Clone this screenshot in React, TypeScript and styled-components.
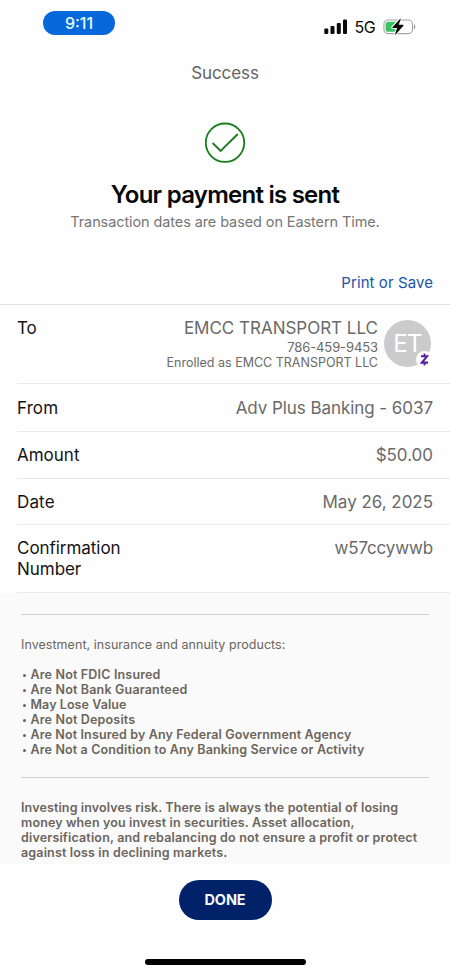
import React from "react";
import styled, { createGlobalStyle } from "styled-components";

const GlobalStyle = createGlobalStyle`
  *, *::before, *::after { box-sizing: border-box; }
  body { margin: 0; background: #fefefe; }
`;

const Screen = styled.div`
  width: 450px;
  height: 973px;
  display: flex;
  flex-direction: column;
  overflow: hidden;
  background: #fefefe;
  color: #141414;
  font-family: Inter, "Liberation Sans", sans-serif;
  font-size: 17px;
  line-height: 21px;
  white-space: nowrap;
`;

const StatusBar = styled.header`
  display: flex;
  justify-content: space-between;
  align-items: flex-start;
  height: 54px;
  flex: none;
  padding: 11px 34px 0 43px;
`;

const TimePill = styled.time`
  width: 72px;
  height: 24px;
  border-radius: 12px;
  background: #0668da;
  color: #e8fbff;
  font-size: 16px;
  font-weight: 500;
  line-height: 25px;
  letter-spacing: 0;
  text-align: center;
`;

const StatusIcons = styled.div`
  display: flex;
  align-items: center;
  height: 18px;
  margin-top: 7px;
  color: #0a0a0a;
`;

const Network = styled.span`
  margin: 1px 8px 0 7px;
  font-size: 16px;
  letter-spacing: -0.6px;
`;

const NavTitle = styled.div`
  flex: none;
  height: 38px;
  line-height: 38px;
  text-align: center;
  color: #646464;
  letter-spacing: -0.1px;
`;

const Hero = styled.section`
  flex: none;
  height: 173px;
  padding-top: 30px;
  display: flex;
  flex-direction: column;
  align-items: center;
`;

const Title = styled.h1`
  margin: 15px 0 0;
  font-size: 24px;
  line-height: 32px;
  font-weight: 600;
  letter-spacing: -0.75px;
  color: #080808;
`;

const Subtitle = styled.p`
  margin: 1px 0 0;
  font-size: 14.5px;
  line-height: 20px;
  color: #777;
  letter-spacing: -0.1px;
`;

const Actions = styled.div`
  flex: none;
  display: flex;
  justify-content: flex-end;
  height: 39px;
  padding: 7px 17px 0 0;
`;

const TextLink = styled.a`
  color: #1a56a5;
  font-size: 15px;
  letter-spacing: 0.08px;
`;

const Details = styled.dl`
  flex: none;
  margin: 0;
  border-top: 1px solid #e3e3e3;
`;

const Row = styled.div<{ $height: number; $top?: number }>`
  height: ${(p) => p.$height}px;
  display: flex;
  justify-content: space-between;
  margin-left: 17px;
  padding: ${(p) => p.$top ?? 13}px 17px 0 0;
  border-bottom: 1px solid #e9e9e9;
`;

const Label = styled.dt<{ $spacing?: number }>`
  width: 125px;
  white-space: normal;
  letter-spacing: ${(p) => p.$spacing ?? -0.2}px;
`;

const Value = styled.dd<{ $spacing?: number }>`
  margin: 0;
  color: #6a6a6a;
  text-align: right;
  letter-spacing: ${(p) => p.$spacing ?? -0.2}px;
`;

const Payee = styled.dd`
  margin: 0;
  display: flex;
  gap: 6px;
  color: #6a6a6a;
  text-align: right;
`;

const PayeeName = styled.div`
  letter-spacing: -0.01px;
`;

const PayeeNote = styled.div<{ $size: number; $spacing: number }>`
  font-size: ${(p) => p.$size}px;
  line-height: 16px;
  letter-spacing: ${(p) => p.$spacing}px;
`;

const Avatar = styled.div`
  position: relative;
  width: 47px;
  height: 47px;
  margin: 2px 2px 0 0;
  border-radius: 50%;
  background: #cbcbcb;
  color: #fff;
  font-size: 24px;
  font-weight: 400;
  line-height: 47px;
  letter-spacing: -0.8px;
  text-align: center;
`;

const Badge = styled.span`
  position: absolute;
  right: -2px;
  bottom: -1px;
  width: 17px;
  height: 17px;
  border-radius: 50%;
  background: #fefefe;
  display: flex;
  align-items: center;
  justify-content: center;
`;

const Disclosures = styled.section`
  flex: none;
  height: 271px;
  padding: 21px 21px 0;
  background: #fafafa;
  color: #6b655c;
  font-size: 12.5px;
  line-height: 15px;
`;

const Rule = styled.hr`
  height: 1px;
  margin: 0;
  border: 0;
  background: #d2d2d2;
`;

const Intro = styled.p`
  margin: 22px 0 15px;
  letter-spacing: 0.05px;
`;

const Notices = styled.ul`
  margin: 0 0 20px;
  padding: 0;
  list-style: none;
  font-weight: 600;
`;

const Notice = styled.li<{ $spacing: number }>`
  letter-spacing: ${(p) => p.$spacing}px;
  display: flex;
  &::before {
    content: "";
    width: 3px;
    height: 3px;
    margin: 7px 4.5px 0 2px;
    border-radius: 50%;
    background: currentColor;
  }
`;

const Risk = styled.p`
  margin: 22px 0 0;
  font-weight: 600;
`;

const RiskLine = styled.span<{ $spacing: number }>`
  display: block;
  letter-spacing: ${(p) => p.$spacing}px;
`;

const Footer = styled.footer`
  flex: 1;
  display: flex;
  flex-direction: column;
  align-items: center;
  justify-content: space-between;
  padding: 16px 0 8px;
`;

const DoneButton = styled.button`
  width: 93px;
  height: 40px;
  padding: 0;
  border: 0;
  border-radius: 20px;
  background: #012169;
  color: #f4f8ff;
  font: 700 14.5px/40px Inter, "Liberation Sans", sans-serif;
  letter-spacing: -0.15px;
`;

const HomeIndicator = styled.div`
  width: 161px;
  height: 6px;
  border-radius: 3px;
  background: #000;
`;

const SignalIcon = () => (
  <svg width="24" height="16" viewBox="0 0 24 16" fill="currentColor">
    <rect x="0.3" y="9.5" width="4" height="5.5" rx="1.1" />
    <rect x="6.5" y="7" width="4" height="8" rx="1.1" />
    <rect x="12.8" y="4" width="4" height="11" rx="1.1" />
    <rect x="19" y="0.6" width="4" height="14.4" rx="1.1" />
  </svg>
);

const BatteryIcon = () => (
  <svg width="33" height="18" viewBox="0 0 33 18">
    <rect x="0.9" y="2" width="28.7" height="13.6" rx="4.4" fill="none" stroke="#a3a3a3" strokeWidth="1.1" />
    <path d="M31 6.6c1.6.6 1.6 3.9 0 4.5z" fill="#8a8a8a" />
    <path d="M5.2 3.8H14v10H5.2a2.6 2.6 0 0 1-2.6-2.6V6.4A2.6 2.6 0 0 1 5.2 3.8z" fill="#3cc463" />
    <path
      d="M17 .9 9.4 9.2q-.5.8.5.8h4.2l-2 6q-.1 1.1.8.3l7.5-8.6q.5-.9-.5-.9h-4.2l2-5.4q.1-1.1-.7-.5z"
      fill="#0a0a0a"
      stroke="#fefefe"
      strokeWidth="2"
      paintOrder="stroke"
    />
  </svg>
);

const SuccessIcon = () => (
  <svg width="42" height="42" viewBox="0 0 42 42" fill="none" stroke="#1b7d1f">
    <circle cx="21" cy="20.7" r="19.2" strokeWidth="1.8" />
    <path d="M8.6 21 16.6 29 33.8 12" strokeWidth="1.9" />
  </svg>
);

const ZelleIcon = () => (
  <svg width="9" height="13" viewBox="0 0 9 13" fill="none" stroke="#5b1da0">
    <path d="M1 3.3H7L1.9 9.6H8" strokeWidth="2.1" />
    <path d="M4.5.5V3M4.5 10V12.5" strokeWidth="1.8" />
  </svg>
);

const rows = [
  { label: "From", value: "Adv Plus Banking - 6037", height: 48, top: 14, labelSpacing: 0.1, valueSpacing: -0.06 },
  { label: "Amount", value: "$50.00", height: 47, top: 13, labelSpacing: 0, valueSpacing: -0.02 },
  { label: "Date", value: "May 26, 2025", height: 46, top: 13, labelSpacing: 0.15, valueSpacing: -0.03 },
  { label: "Confirmation Number", value: "w57ccywwb", height: 68, top: 13, labelSpacing: -0.04, valueSpacing: -0.15 },
];

const notices = [
  { text: "Are Not FDIC Insured", spacing: 0.17 },
  { text: "Are Not Bank Guaranteed", spacing: 0.17 },
  { text: "May Lose Value", spacing: 0.07 },
  { text: "Are Not Deposits", spacing: 0.17 },
  { text: "Are Not Insured by Any Federal Government Agency", spacing: 0.13 },
  { text: "Are Not a Condition to Any Banking Service or Activity", spacing: 0.14 },
];

const riskLines = [
  { text: "Investing involves risk. There is always the potential of losing", spacing: 0.13 },
  { text: "money when you invest in securities. Asset allocation,", spacing: 0.13 },
  { text: "diversification, and rebalancing do not ensure a profit or protect", spacing: 0.17 },
  { text: "against loss in declining markets.", spacing: 0.16 },
];

export default function App() {
  return (
    <>
      <GlobalStyle />
      <Screen>
        <StatusBar>
          <TimePill>9:11</TimePill>
          <StatusIcons>
            <SignalIcon />
            <Network>5G</Network>
            <BatteryIcon />
          </StatusIcons>
        </StatusBar>
        <NavTitle>Success</NavTitle>
        <Hero>
          <SuccessIcon />
          <Title>Your payment is sent</Title>
          <Subtitle>Transaction dates are based on Eastern Time.</Subtitle>
        </Hero>
        <Actions>
          <TextLink>Print or Save</TextLink>
        </Actions>
        <Details>
          <Row $height={79}>
            <Label>To</Label>
            <Payee>
              <div>
                <PayeeName>EMCC TRANSPORT LLC</PayeeName>
                <PayeeNote $size={13} $spacing={-0.1}>786-459-9453</PayeeNote>
                <PayeeNote $size={12.5} $spacing={0}>Enrolled as EMCC TRANSPORT LLC</PayeeNote>
              </div>
              <Avatar>
                ET
                <Badge>
                  <ZelleIcon />
                </Badge>
              </Avatar>
            </Payee>
          </Row>
          {rows.map((r) => (
            <Row key={r.label} $height={r.height} $top={r.top}>
              <Label $spacing={r.labelSpacing}>{r.label}</Label>
              <Value $spacing={r.valueSpacing}>{r.value}</Value>
            </Row>
          ))}
        </Details>
        <Disclosures>
          <Rule />
          <Intro>Investment, insurance and annuity products:</Intro>
          <Notices>
            {notices.map((n) => (
              <Notice key={n.text} $spacing={n.spacing}>{n.text}</Notice>
            ))}
          </Notices>
          <Rule />
          <Risk>
            {riskLines.map((l) => (
              <RiskLine key={l.text} $spacing={l.spacing}>{l.text}</RiskLine>
            ))}
          </Risk>
        </Disclosures>
        <Footer>
          <DoneButton>DONE</DoneButton>
          <HomeIndicator />
        </Footer>
      </Screen>
    </>
  );
}
